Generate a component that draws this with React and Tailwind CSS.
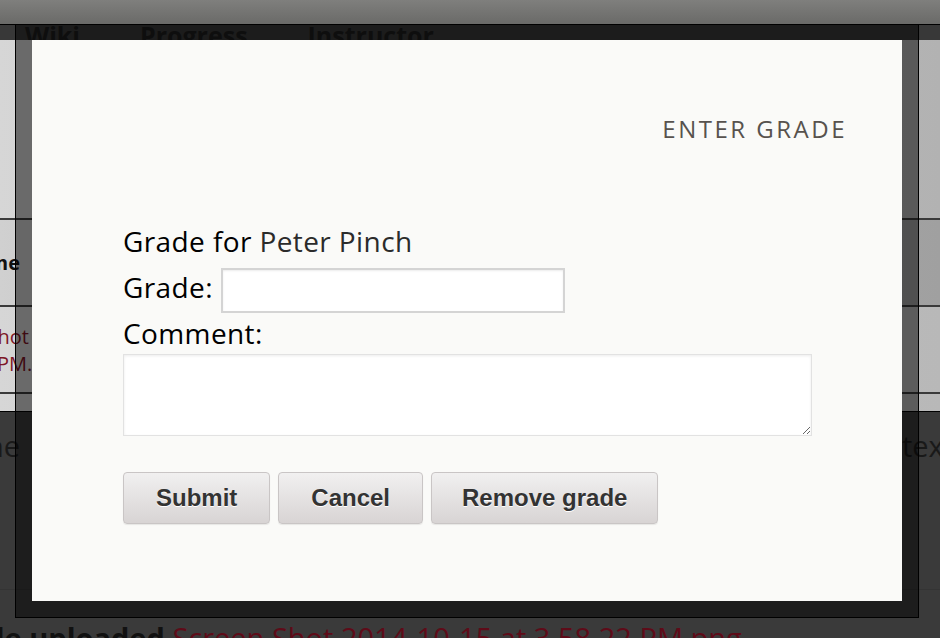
import React from "react";

const sans = "font-['Open_Sans','Noto_Sans',sans-serif]";
const btn =
  "h-[52px] rounded-[4px] border border-[#c9c5c5] bg-linear-to-b from-[#f1f0f0] to-[#d8d4d4] font-['Liberation_Sans',Arial,sans-serif] font-bold text-[24px] text-[#333] [text-shadow:0_1px_0_#fff] shadow-[0_1px_1px_rgba(0,0,0,0.08)]";

const App = () => {
  return (
    <div className={`relative w-[940px] h-[638px] overflow-hidden bg-[#3a3a3a] ${sans}`}>
      {/* page behind the modal */}
      <div className="h-[24px] bg-linear-to-b from-[#7f7f7d] to-[#6a6a68]" />
      <div className="h-px bg-black" />
      <div className="h-[15px] bg-[#383838] overflow-hidden">
        <div className="flex items-start text-[25px] leading-[20px] font-bold text-[#1c1c1c]">
          <span className="ml-[25px]">Wiki</span>
          <span className="ml-[60px]">Progress</span>
          <span className="ml-[60px]">Instructor</span>
        </div>
      </div>

      {/* table area */}
      <div className="h-[178px] bg-linear-to-r from-[#d6d6d6] via-[#c2c2c2] to-[#b2b2b2]" />
      <div className="h-[2px] bg-[#3a3a3a]" />
      <div className="h-[85px] bg-linear-to-r from-[#d0d0d0] via-[#b0b0b0] to-[#a0a0a0] flex items-center">
        <div className="w-[20px] flex justify-end">
          <span className="whitespace-nowrap text-[20px] font-bold text-[#111]">Name</span>
        </div>
      </div>
      <div className="h-[2px] bg-[#3a3a3a]" />
      <div className="h-[85px] bg-linear-to-r from-[#d6d6d6] via-[#c2c2c2] to-[#b8b8b8] pt-[16px] text-[20px] leading-[27px] text-[#7d1526]">
        <div className="w-[29px] flex justify-end">
          <span className="whitespace-nowrap">Screen Shot</span>
        </div>
        <div className="whitespace-nowrap -ml-[3px]">PM.png</div>
      </div>
      <div className="h-[2px] bg-[#3a3a3a]" />
      <div className="h-[17px] bg-linear-to-r from-[#d6d6d6] via-[#c2c2c2] to-[#b8b8b8]" />
      <div className="h-px bg-black" />

      {/* dark lower area */}
      <div className="pt-[19px] flex items-start text-[29px] leading-[29px] text-[#191919]">
        <div className="w-[20px] flex justify-end">
          <span className="whitespace-nowrap">one</span>
        </div>
        <span className="ml-[882px] whitespace-nowrap">text</span>
      </div>
      <div className="h-[129px]" />
      <div className="h-px bg-[#343434]" />
      <div className="pt-[33px] whitespace-nowrap text-[29px] leading-[29px] -ml-[29px]">
        <span className="font-bold text-[#111]">File uploaded </span>
        <span className="text-[#5e0b18]">Screen Shot 2014-10-15 at 3.58.22 PM.png</span>
      </div>

      {/* modal */}
      <div className="absolute left-[15px] top-[24px] w-[904px] h-[594px] border border-black bg-black/50 pt-[15px] pl-[16px] pr-[16px] pb-[16px]">
        <div className="h-full bg-[#fafaf8] pt-[73px] pl-[91px] pr-[55px]">
          <div className="flex justify-end">
            <h2 className="text-[24px] leading-[32px] tracking-[2.5px] text-[#57524e] font-normal">
              ENTER GRADE
            </h2>
          </div>

          <div className="mt-[75px] text-[28px] tracking-[0.4px] text-black">
            <div className="leading-[42px]">
              Grade for <span className="text-[#2b2b2b]">Peter Pinch</span>
            </div>
            <div className="flex items-start">
              <label className="mt-[9px] leading-[32px]">Grade:</label>
              <input
                type="text"
                className="ml-[8px] mt-[6px] w-[344px] h-[45px] border-2 border-[#d4d4d4] bg-white shadow-[inset_0_1px_2px_rgba(0,0,0,0.08)] outline-none"
              />
            </div>
            <div className="mt-[7px] leading-[26px]">Comment:</div>
            <textarea className="block mt-[8px] w-[689px] h-[82px] border border-[#e2e2e2] bg-white shadow-[inset_0_1px_3px_rgba(0,0,0,0.08)] outline-none" />
          </div>

          <div className="mt-[36px] flex gap-2">
            <button className={`${btn} px-8`}>Submit</button>
            <button className={`${btn} px-8`}>Cancel</button>
            <button className={`${btn} px-[30px]`}>Remove grade</button>
          </div>
        </div>
      </div>
    </div>
  );
};

export default App;
